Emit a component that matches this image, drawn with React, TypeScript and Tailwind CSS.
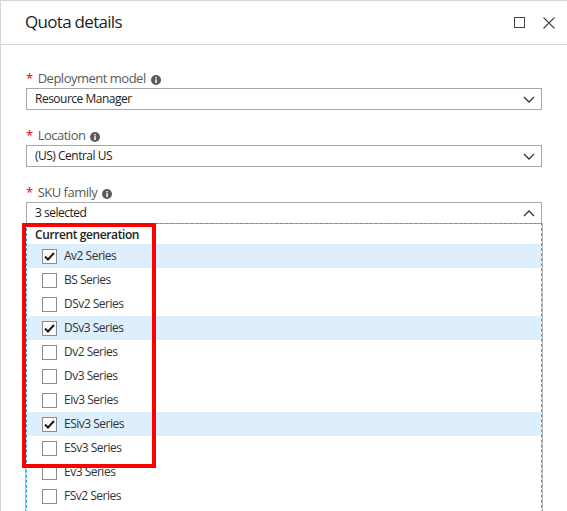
import React from "react";

const font = { fontFamily: '"Open Sans", "Noto Sans", sans-serif' };

function Info() {
  return (
    <svg width="10" height="10" viewBox="0 0 10 10" className="ml-[5px] mt-[2px]">
      <circle cx="5" cy="5" r="5" fill="#5a5a5a" />
      <rect x="4.3" y="4.2" width="1.5" height="3.8" fill="#fff" />
      <rect x="4.3" y="2" width="1.5" height="1.4" fill="#fff" />
    </svg>
  );
}

function Chevron({ up }: { up?: boolean }) {
  return (
    <svg width="12" height="7" viewBox="0 0 12 7">
      {up ? (
        <path d="M1 6 L6 1 L11 6" fill="none" stroke="#333" strokeWidth="1.3" />
      ) : (
        <path d="M1 1 L6 6 L11 1" fill="none" stroke="#333" strokeWidth="1.3" />
      )}
    </svg>
  );
}

function Label({ text }: { text: string }) {
  return (
    <div className="h-[18px] flex items-center text-[13px] text-[#5a5a5a] tracking-[-0.5px]">
      <span className="text-[#e00000] mr-[5px] text-[13px]">*</span>
      <span>{text}</span>
      <Info />
    </div>
  );
}

function Select({ value, up }: { value: string; up?: boolean }) {
  return (
    <div className="h-[22px] w-[516px] border border-[#a8a8a8] flex items-center justify-between pl-[8px] pr-[6px] text-[12px] text-[#222] tracking-[-0.5px]">
      <span>{value}</span>
      <Chevron up={up} />
    </div>
  );
}

const rows: [string, boolean][] = [
  ["Av2 Series", true],
  ["BS Series", false],
  ["DSv2 Series", false],
  ["DSv3 Series", true],
  ["Dv2 Series", false],
  ["Dv3 Series", false],
  ["Eiv3 Series", false],
  ["ESiv3 Series", true],
  ["ESv3 Series", false],
  ["Ev3 Series", false],
  ["FSv2 Series", false],
];

function Row({ name, checked }: { name: string; checked: boolean }) {
  return (
    <div className={`h-[24px] flex items-center pl-[15px] ${checked ? "bg-[#ddeefc]" : ""}`}>
      <div className="w-[15px] h-[15px] border border-[#8c8c8c] bg-white flex items-center justify-center">
        {checked && (
          <svg width="13" height="13" viewBox="0 0 13 13">
            <path d="M2 6.5 L5 9.5 L11 3" fill="none" stroke="#1a1a1a" strokeWidth="2" />
          </svg>
        )}
      </div>
      <span className="ml-[7px] text-[12px] text-[#333] tracking-[-0.5px]">{name}</span>
    </div>
  );
}

export default function App() {
  return (
    <div className="relative w-[567px] h-[511px] overflow-hidden bg-white border-l border-t border-[#d6d6d6]" style={font}>
      <div className="h-[44px] border-b border-[#d6d6d6] flex items-center justify-between pl-[24px] pr-[12px]">
        <span className="text-[17px] text-[#1e1e1e] -mt-[1px] tracking-[-0.7px]">Quota details</span>
        <div className="flex items-center gap-[18px]">
          <svg width="11" height="11" viewBox="0 0 11 11">
            <rect x="0.5" y="0.5" width="10" height="10" fill="none" stroke="#444" strokeWidth="1" />
          </svg>
          <svg width="12" height="12" viewBox="0 0 12 12">
            <path d="M0.5 0.5 L11.5 11.5 M11.5 0.5 L0.5 11.5" stroke="#444" strokeWidth="1.1" />
          </svg>
        </div>
      </div>
      <div className="pl-[25px] pt-[25px]">
        <Label text="Deployment model" />
        <Select value="Resource Manager" />
        <div className="h-[17px]" />
        <Label text="Location" />
        <Select value="(US) Central US" />
        <div className="h-[17px]" />
        <Label text="SKU family" />
        <Select value="3 selected" up />
        <div className="w-[516px] h-[300px] border-x border-t border-dashed border-[#22aee8] -mt-[1px] shadow-[1px_0_0_#b4b4b4,-1px_0_0_#b4b4b4]">
          <div className="h-[20px] flex items-end pl-[8px] text-[12px] font-semibold text-[#222] tracking-[-0.4px]">Current generation</div>
          {rows.map(([n, c]) => (
            <Row key={n} name={n} checked={c} />
          ))}
        </div>
      </div>
      <div className="absolute left-[21px] top-[222px] w-[134px] h-[245px] border-[4px] border-[#ff0000]" />
    </div>
  );
}
